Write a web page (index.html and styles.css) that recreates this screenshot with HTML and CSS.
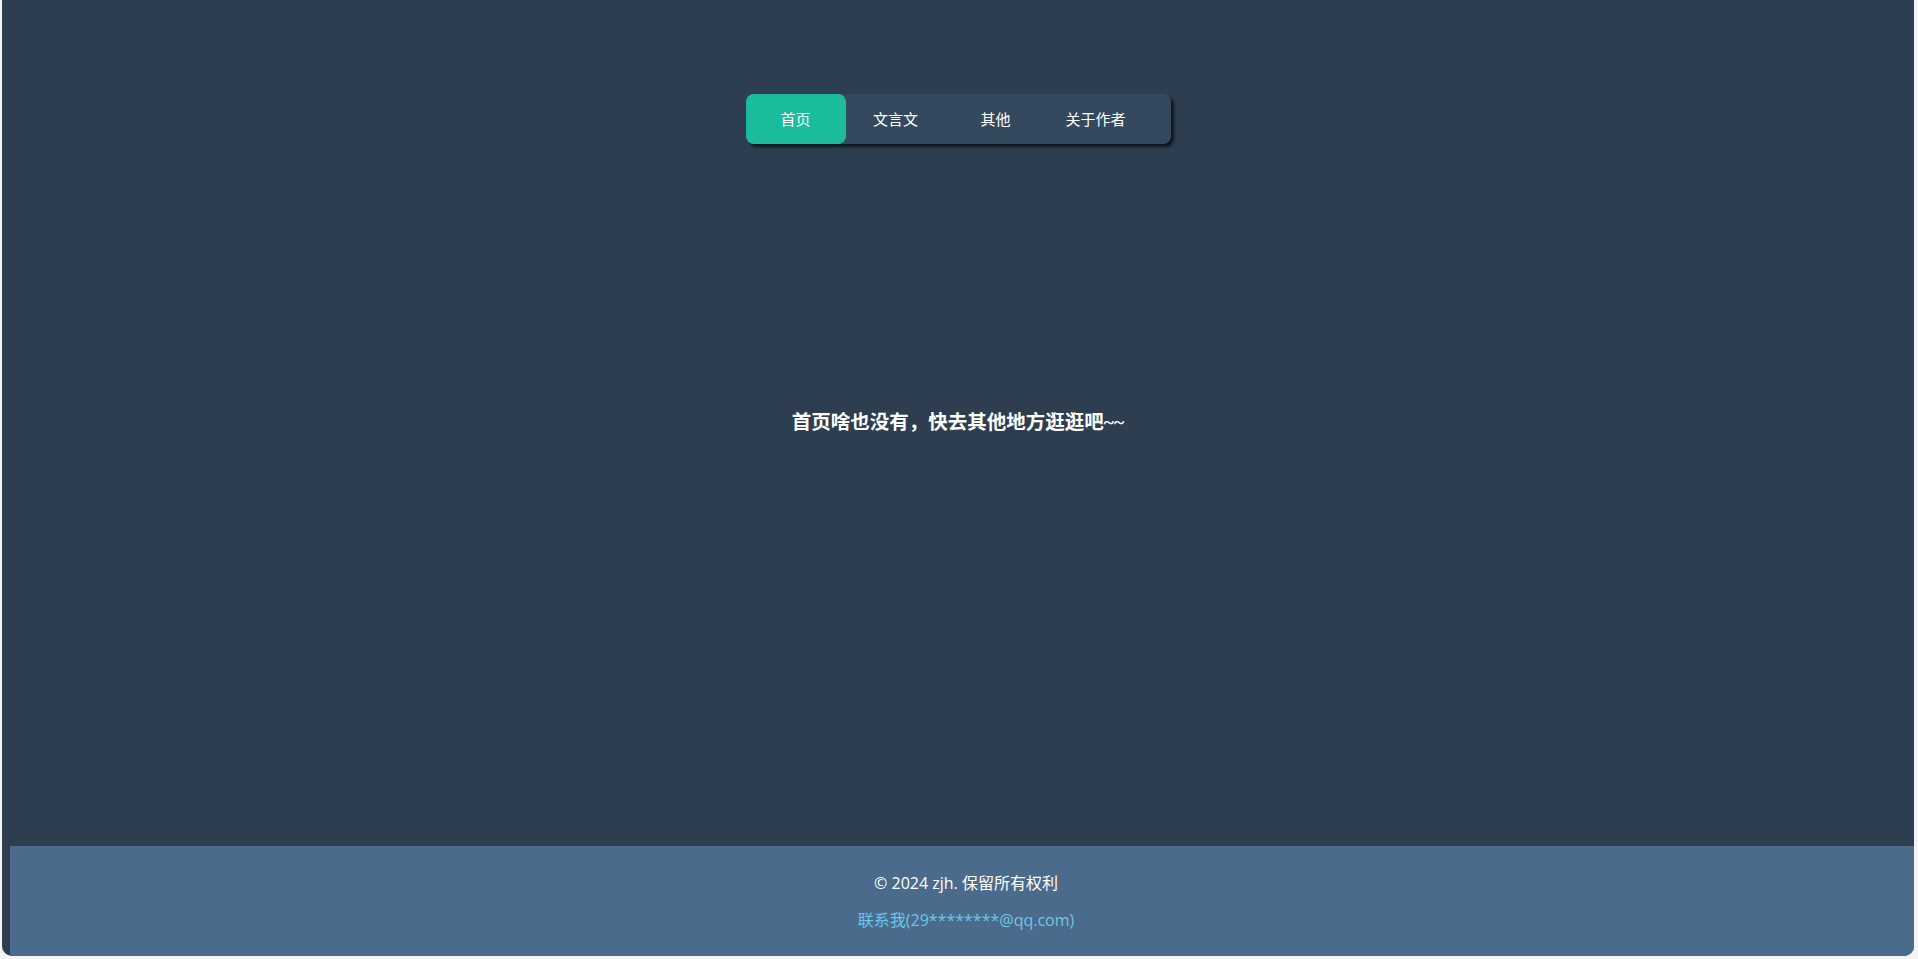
FILE: index.html
```html
<!DOCTYPE html>
<html lang="zh-CN">
<head>
<meta charset="utf-8">
<title>首页</title>
<link rel="stylesheet" href="styles.css">
</head>
<body>
<div class="app">
  <main class="main">
    <nav class="nav">
      <a class="nav-item active">首页</a>
      <a class="nav-item">文言文</a>
      <a class="nav-item">其他</a>
      <a class="nav-item">关于作者</a>
    </nav>
    <h3 class="message">首页啥也没有，快去其他地方逛逛吧~~</h3>
  </main>
  <footer class="footer">
    <p class="copy">© 2024 zjh. 保留所有权利</p>
    <a class="contact">联系我(29********@qq.com)</a>
  </footer>
</div>
</body>
</html>
```

FILE: styles.css
```css
html, body {
  margin: 0;
  padding: 0;
}
body {
  background: #f4f4f4;
  height: 959px;
  overflow: hidden;
}
.app {
  margin: 0 4px 0 2px;
  height: 956px;
  background: #2c3e50;
  border-radius: 0 0 10px 10px;
  overflow: hidden;
  display: flex;
  flex-direction: column;
}
.main {
  flex: 1;
  display: flex;
  flex-direction: column;
  align-items: center;
}
.nav {
  margin-top: 94px;
  display: flex;
  padding-right: 25px;
  background: #34495e;
  border-radius: 8px;
  box-shadow: 3px 3px 3px rgba(0, 0, 0, 0.65);
}
.nav-item {
  width: 100px;
  height: 50px;
  display: flex;
  align-items: center;
  justify-content: center;
  padding-bottom: 1px;
  box-sizing: border-box;
  color: #ffffff;
  font-family: "Noto Sans CJK SC", sans-serif;
  font-size: 15px;
  border-radius: 8px;
  cursor: pointer;
}
.nav-item.active {
  background: #1abc9c;
}
.message {
  margin: 265px 0 0;
  line-height: 28px;
  font-family: "Liberation Serif", "Noto Sans CJK SC", serif;
  font-weight: bold;
  font-size: 19.5px;
  color: #ffffff;
}
.footer {
  flex-shrink: 0;
  margin-left: 8px;
  width: 100%;
  height: 110px;
  box-sizing: border-box;
  padding-top: 25px;
  background: #4a6b8b;
  text-align: center;
  font-family: "Open Sans", "Noto Sans CJK SC", sans-serif;
  font-size: 16px;
  line-height: 24px;
}
.copy {
  margin: 0 0 13px;
  color: #ffffff;
}
.contact {
  display: block;
  color: #6ec6ea;
}
```
